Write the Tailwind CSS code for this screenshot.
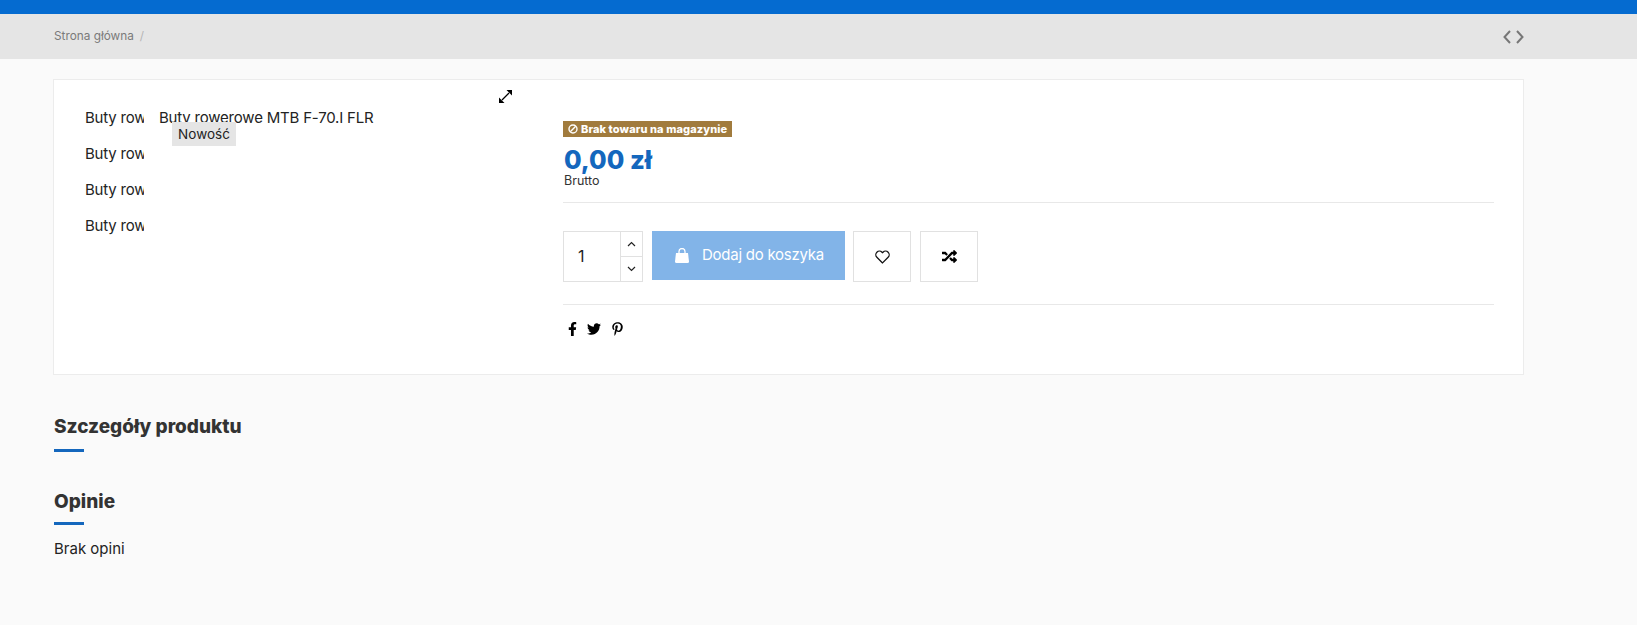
<!DOCTYPE html>
<html lang="pl">
<head>
    <meta charset="UTF-8">
    <meta name="viewport" content="width=device-width, initial-scale=1.0">
    <title>Buty rowerowe MTB F-70.I FLR</title>
    <script src="https://cdn.jsdelivr.net/npm/@tailwindcss/browser@4"></script>
</head>
<body class="bg-[#fafafa] font-['Inter',sans-serif] text-[#232323] h-[625px] overflow-hidden">
    <!-- Top bar -->
    <div class="h-[14px] bg-[#056bd0]"></div>

    <!-- Breadcrumb -->
    <div class="h-[45px] bg-[#e5e5e5] flex items-center justify-between pl-[54px] pr-[113px]">
        <div class="flex items-center gap-[6px] text-[11.8px] text-[#7a7a7a]">
            <span>Strona główna</span>
            <span class="text-[#b5b5b5]">/</span>
        </div>
        <div class="flex items-center gap-[5px]">
            <svg class="w-[8px] h-[14px]" viewBox="0 0 8 14" fill="none" stroke="#777" stroke-width="2"><path d="M7 1 1.500 7 7 13"/></svg>
            <svg class="w-[8px] h-[14px]" viewBox="0 0 8 14" fill="none" stroke="#777" stroke-width="2"><path d="M1 1l5.500 6L1 13"/></svg>
        </div>
    </div>

    <!-- Product card -->
    <div class="relative ml-[53px] mt-[20px] w-[1471px] h-[296px] bg-white border border-[#ececec] flex pt-[20px] pl-[31px] pr-[29px]">
        <!-- Thumbnails -->
        <div class="w-[59px] shrink-0 overflow-hidden whitespace-nowrap text-[15px] tracking-[-0.2px]">
            <div class="h-[36px] flex items-center pt-[1px]">Buty rowerowe MTB F-70.I FLR</div>
            <div class="h-[36px] flex items-center pt-[1px]">Buty rowerowe MTB F-70.I FLR</div>
            <div class="h-[36px] flex items-center pt-[1px]">Buty rowerowe MTB F-70.I FLR</div>
            <div class="h-[36px] flex items-center">Buty rowerowe MTB F-70.I FLR</div>
        </div>

        <!-- Main image -->
        <div class="relative ml-[15px] w-[404px] shrink-0">
            <div class="h-[25px] leading-[36px] overflow-hidden whitespace-nowrap text-[15px] tracking-[-0.2px]">Buty rowerowe MTB F-70.I FLR</div>
            <span class="absolute left-[13px] top-[22px] w-[64px] h-[24px] bg-[#e5e5e5] flex items-center justify-center text-[13.5px]">Nowość</span>
            <svg class="absolute left-[340px] top-[-10px] w-[13px] h-[13px]" viewBox="0 0 13 13" fill="#000"><path d="M7.500 0H13v5.500zM0 7.500V13h5.500z"/><path d="M3 10l7-7" stroke="#000" stroke-width="1.200"/></svg>
        </div>

        <!-- Details -->
        <div class="flex-1 pt-[16px]">
            <div class="inline-flex items-center gap-[3px] h-[16px] w-[169px] pl-[5px] bg-[#a17b3d] text-white text-[11px] tracking-[0.1px] font-extrabold whitespace-nowrap">
                <svg class="w-[10px] h-[10px] shrink-0" viewBox="0 0 10 10" fill="none" stroke="#fff" stroke-width="1.400"><circle cx="5" cy="5" r="4"/><path d="M2.300 7.700 7.700 2.300"/></svg>
                <span>Brak towaru na magazynie</span>
            </div>
            <div class="mt-[7px] h-[26px] flex items-center pl-[1px] text-[25.5px] font-extrabold text-[#1467bd]">0,00 zł</div>
            <div class="mt-[1px] pl-[1px] text-[12.5px] leading-[14px] text-[#333]">Brutto</div>
            <div class="mt-[14px] border-t border-[#e8e8e8]"></div>

            <!-- Add to cart row -->
            <div class="mt-[28px] flex items-start">
                <div class="w-[80px] h-[51px] border border-[#e1e1e1] flex">
                    <div class="flex-1 flex items-center pl-[14px] pb-[1px] text-[16px]">1</div>
                    <div class="w-[22px] border-l border-[#e1e1e1] flex flex-col">
                        <div class="flex-1 flex items-center justify-center border-b border-[#e1e1e1]">
                            <svg class="w-[9px] h-[6px]" viewBox="0 0 9 6" fill="none" stroke="#222" stroke-width="1.200"><path d="M1 5l3.500-3.500L8 5"/></svg>
                        </div>
                        <div class="flex-1 flex items-center justify-center">
                            <svg class="w-[9px] h-[6px]" viewBox="0 0 9 6" fill="none" stroke="#222" stroke-width="1.200"><path d="M1 1l3.500 3.500L8 1"/></svg>
                        </div>
                    </div>
                </div>
                <button class="ml-[9px] w-[193px] h-[49px] bg-[#82b4e8] text-white text-[15px] tracking-[-0.25px] flex items-center pl-[23px] gap-[13px]">
                    <svg class="w-[14px] h-[15px]" viewBox="0 0 14 15" fill="#fff"><path d="M1 5h12l1 8.500q0 1.500-1.500 1.500h-11Q0 15 0 13.500z"/><path d="M4 5V3.500a3 3 0 0 1 6 0V5" fill="none" stroke="#fff" stroke-width="1.300"/></svg>
                    <span>Dodaj do koszyka</span>
                </button>
                <button class="ml-[8px] w-[58px] h-[51px] border border-[#e1e1e1] flex items-center justify-center">
                    <svg class="w-[15px] h-[14px]" viewBox="0 0 24 22" fill="none" stroke="#111" stroke-width="2"><path d="M12 20.500 3 11.500a5.800 5.800 0 0 1 0-8.200 5.800 5.800 0 0 1 8.200 0l.8.800.8-.8a5.800 5.800 0 0 1 8.200 0 5.800 5.800 0 0 1 0 8.200z"/></svg>
                </button>
                <button class="ml-[9px] w-[58px] h-[51px] border border-[#e1e1e1] flex items-center justify-center">
                    <svg class="w-[15px] h-[15px]" viewBox="0 0 512 512" fill="#000"><path d="M504.971 359.029c9.373 9.373 9.373 24.569 0 33.941l-80 79.984c-15.01 15.01-40.971 4.49-40.971-16.971V416h-58.785a12.004 12.004 0 0 1-8.773-3.812l-70.556-75.596 53.333-57.143L352 336h32v-39.981c0-21.438 25.943-31.998 40.971-16.971l80 79.981zM12 176h84l52.781 56.551 53.333-57.143-70.556-75.596A11.999 11.999 0 0 0 122.785 96H12c-6.627 0-12 5.373-12 12v56c0 6.627 5.373 12 12 12zm372 0v39.984c0 21.46 25.961 31.98 40.971 16.971l80-79.984c9.373-9.373 9.373-24.569 0-33.941l-80-79.981C409.943 24.021 384 34.582 384 56.019V96h-58.785a12.004 12.004 0 0 0-8.773 3.812L96 336H12c-6.627 0-12 5.373-12 12v56c0 6.627 5.373 12 12 12h110.785c3.326 0 6.503-1.381 8.773-3.812L352 176h32z"/></svg>
                </button>
            </div>

            <div class="mt-[22px] border-t border-[#e8e8e8]"></div>

            <!-- Social -->
            <div class="mt-[17px] pl-[5px] flex items-center h-[14px]">
                <svg class="w-[9px] h-[14px]" viewBox="0 0 320 512" fill="#000"><path d="M279.14 288l14.22-92.66h-88.91v-60.13c0-25.35 12.42-50.06 52.24-50.06h40.42V6.26S260.43 0 225.36 0c-73.22 0-121.08 44.38-121.08 124.72v70.62H22.89V288h81.39v224h100.17V288z"/></svg>
                <svg class="ml-[10px] w-[14px] h-[14px]" viewBox="0 0 512 512" fill="#000"><path d="M459.37 151.716c.325 4.548.325 9.097.325 13.645 0 138.72-105.583 298.558-298.558 298.558-59.452 0-114.68-17.219-161.137-47.106 8.447.974 16.568 1.299 25.34 1.299 49.055 0 94.213-16.568 130.274-44.832-46.132-.975-84.792-31.188-98.112-72.772 6.498.974 12.995 1.624 19.818 1.624 9.421 0 18.843-1.3 27.614-3.573-48.081-9.747-84.143-51.98-84.143-102.985v-1.299c13.969 7.797 30.214 12.67 47.431 13.319-28.264-18.843-46.781-51.005-46.781-87.391 0-19.492 5.197-37.36 14.294-52.954 51.655 63.675 129.3 105.258 216.365 109.807-1.624-7.797-2.599-15.918-2.599-24.04 0-57.828 46.782-104.934 104.934-104.934 30.213 0 57.502 12.67 76.67 33.137 23.715-4.548 46.456-13.32 66.599-25.34-7.798 24.366-24.366 44.833-46.132 57.827 21.117-2.273 41.584-8.122 60.426-16.243-14.292 20.791-32.161 39.308-52.628 54.253z"/></svg>
                <svg class="ml-[11px] w-[11px] h-[14px]" viewBox="0 0 384 512" fill="#000"><path d="M204 6.5C101.4 6.5 0 74.9 0 185.6 0 256 39.6 296 63.6 296c9.9 0 15.6-27.6 15.6-35.4 0-9.3-23.7-29.1-23.7-67.8 0-80.4 61.2-137.4 140.4-137.4 68.1 0 118.5 38.7 118.5 109.8 0 53.1-21.3 152.7-90.3 152.7-24.9 0-46.2-18-46.2-43.8 0-37.8 26.4-74.4 26.4-113.4 0-66.2-93.9-54.2-93.9 25.8 0 16.8 2.1 35.4 9.6 50.7-13.8 59.4-42 147.9-42 209.1 0 18.9 2.7 37.5 4.5 56.4 3.4 3.8 1.7 3.4 6.9 1.5 50.4-69 48.6-82.5 71.4-172.8 12.3 23.4 44.1 36 69.3 36 106.2 0 153.9-103.5 153.9-196.8C384 71.3 298.2 6.5 204 6.5z"/></svg>
            </div>
        </div>
    </div>

    <!-- Details and reviews -->
    <div class="pl-[54px] mt-[39px]">
        <h2 class="text-[19px] leading-[26px] font-extrabold text-[#333]">Szczegóły produktu</h2>
        <div class="mt-[9px] w-[30px] h-[3px] bg-[#1467bd]"></div>
        <h2 class="mt-[37px] text-[19px] leading-[26px] font-extrabold text-[#333]">Opinie</h2>
        <div class="mt-[7px] w-[30px] h-[3px] bg-[#1467bd]"></div>
        <p class="mt-[14px] text-[15px] leading-[20px]">Brak opini</p>
    </div>
</body>
</html>
